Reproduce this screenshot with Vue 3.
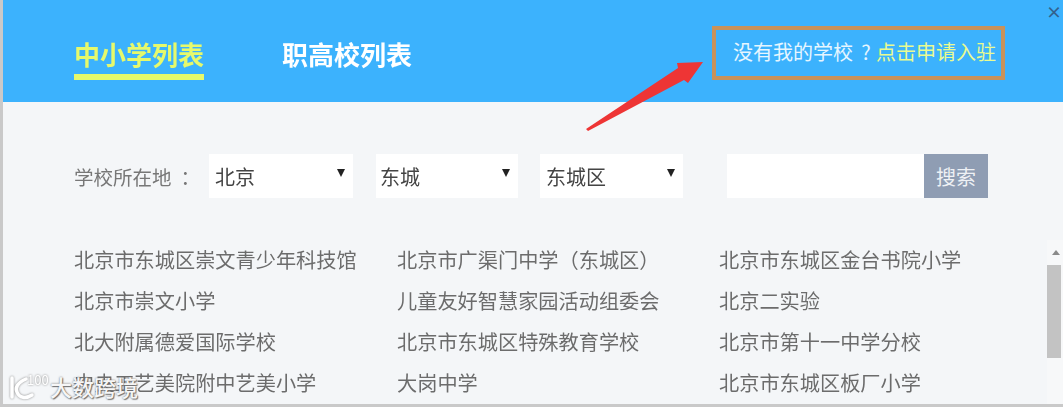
<template>
  <div class="page">
    <header class="top">
      <nav class="tabs">
        <a class="tab active">中小学列表</a>
        <a class="tab">职高校列表</a>
      </nav>
      <div class="apply">没有我的学校<span class="apply-mark">?</span><span class="apply-link">点击申请入驻</span></div>
    </header>

    <main class="content">
      <div class="filter">
        <span class="filter-label">学校所在地<span class="colon">：</span></span>
        <div v-for="s in selects" :key="s.text" class="select" :class="s.cls">
          <span>{{ s.text }}</span>
          <i class="caret"></i>
        </div>
        <div class="search">
          <input class="search-input" type="text" />
          <button class="search-btn">搜索</button>
        </div>
      </div>

      <ul class="schools">
        <li v-for="name in schools" :key="name">{{ name }}</li>
      </ul>
    </main>

    <!-- 滚动条 -->
    <div class="scrollbar">
      <i class="scroll-up"></i>
      <div class="scroll-thumb"></div>
    </div>

    <span class="close">×</span>

    <!-- 红色箭头 -->
    <svg class="arrow" width="140" height="90" viewBox="0 0 140 90">
      <polygon points="8,79 100,18 99,13 125,12 110,33 106,30 10,81" fill="#ee3535" />
    </svg>

    <!-- 水印 -->
    <div class="watermark">
      <svg class="wm-logo" width="44" height="30" viewBox="0 0 44 30">
        <path d="M6 7 L6 26" />
        <path d="M20 8 C11 12 9 17 11 21 C13 27 20 28 26 24" />
        <text x="21" y="14" class="wm-num">100</text>
      </svg>
      <span class="wm-text">大数跨境</span>
    </div>
  </div>
</template>

<script setup>
const selects = [
  { text: '北京', cls: 's1' },
  { text: '东城', cls: 's2' },
  { text: '东城区', cls: 's3' },
]

const schools = [
  '北京市东城区崇文青少年科技馆', '北京市广渠门中学（东城区）', '北京市东城区金台书院小学',
  '北京市崇文小学', '儿童友好智慧家园活动组委会', '北京二实验',
  '北大附属德爱国际学校', '北京市东城区特殊教育学校', '北京市第十一中学分校',
  '中央工艺美院附中艺美小学', '大岗中学', '北京市东城区板厂小学',
]
</script>

<style>
html, body {
  margin: 0;
  background: #f4f6f8;
}
</style>

<style scoped>
.page {
  position: relative;
  width: 1063px;
  height: 407px;
  box-sizing: border-box;
  overflow: hidden;
  border-left: 3px solid #c9c9c9;
  border-bottom: 3px solid #c9c9c9;
  background: #f4f6f8;
  font-family: "Noto Sans CJK SC", "Liberation Sans", sans-serif;
}

.top {
  display: flex;
  align-items: flex-start;
  height: 102px;
  background: #3cb2fd;
}

.tabs {
  display: flex;
  gap: 78px;
  padding: 39px 0 0 71px;
}

.tab {
  font-size: 26px;
  line-height: 30px;
  font-weight: 700;
  color: #fff;
  padding-bottom: 5px;
  filter: blur(0.7px);
}

.tab.active {
  color: #e6f96b;
  border-bottom: 6px solid #e6f96b;
}

.apply {
  margin: 26px 58px 0 auto;
  box-sizing: border-box;
  width: 293px;
  height: 54px;
  border: 4px solid #c8925a;
  padding-left: 17px;
  font-size: 20px;
  line-height: 44px;
  white-space: nowrap;
  color: #e6f6ff;
}

.apply-mark {
  display: inline-block;
  width: 23px;
  text-align: center;
  padding-left: 3px;
  box-sizing: border-box;
}

.apply-link {
  color: #e9fb90;
}

.content {
  padding: 52px 0 0 71px;
}

.filter {
  display: flex;
  align-items: center;
  height: 44px;
  font-size: 19.5px;
  color: #777;
}

.filter-label {
  width: 135px;
  filter: blur(0.7px);
  white-space: nowrap;
}

.colon {
  margin-left: 9px;
}

.select {
  display: flex;
  align-items: center;
  justify-content: space-between;
  box-sizing: border-box;
  height: 44px;
  padding: 0 8px 0 6px;
  background: #fff;
  font-size: 20px;
  color: #444;
}

.select span {
  filter: blur(0.7px);
}

.s1 { width: 144px; margin-right: 23px; }
.s2 { width: 142px; margin-right: 22px; padding-left: 4px; }
.s3 { width: 143px; margin-right: 44px; }

.caret {
  width: 0;
  height: 0;
  margin-top: -6px;
  border-left: 4px solid transparent;
  border-right: 4px solid transparent;
  border-top: 8px solid #222;
}

.search {
  display: flex;
  height: 44px;
}

.search-input {
  width: 197px;
  height: 44px;
  box-sizing: border-box;
  border: none;
  background: #fff;
  outline: none;
}

.search-btn {
  width: 64px;
  height: 44px;
  border: none;
  padding: 0;
  background: #8f9db3;
  color: #eef1f5;
  font-family: inherit;
  font-size: 20px;
}

.schools {
  display: grid;
  grid-template-columns: 323px 322px 1fr;
  grid-auto-rows: 41px;
  margin: 41px 0 0;
  padding: 0;
  list-style: none;
  font-size: 20.2px;
  line-height: 41px;
  color: #6c6c6c;
  white-space: nowrap;
  filter: blur(0.7px);
}

.scrollbar {
  position: absolute;
  top: 240px;
  right: 0;
  bottom: 0;
  width: 16px;
  background: #f7f8f9;
}

.scroll-up {
  position: absolute;
  top: 10px;
  left: 5px;
  width: 0;
  height: 0;
  border-left: 4px solid transparent;
  border-right: 4px solid transparent;
  border-bottom: 5px solid #8a8a8a;
}

.scroll-thumb {
  position: absolute;
  top: 25px;
  left: 0;
  width: 14px;
  height: 93px;
  background: #c3c3c3;
}

.close {
  position: absolute;
  top: 2px;
  right: 1px;
  font-size: 16px;
  line-height: 18px;
  font-weight: 700;
  color: #33618c;
}

.arrow {
  position: absolute;
  top: 50px;
  left: 575px;
  filter: blur(0.6px);
}

.watermark {
  position: absolute;
  left: 3px;
  bottom: 3px;
  display: flex;
  align-items: center;
  color: #fff;
}

.wm-logo {
  fill: none;
  stroke: #fff;
  stroke-width: 3.5;
  stroke-linecap: round;
  filter: drop-shadow(0 0 1px #888);
}

.wm-num {
  fill: #fff;
  stroke: none;
  font-size: 13px;
}

.wm-text {
  font-size: 22px;
  line-height: 30px;
  font-weight: 500;
  color: rgba(255, 255, 255, 0.95);
  text-shadow: 0 0 2px #666, 1px 1px 1px #777;
}
</style>
